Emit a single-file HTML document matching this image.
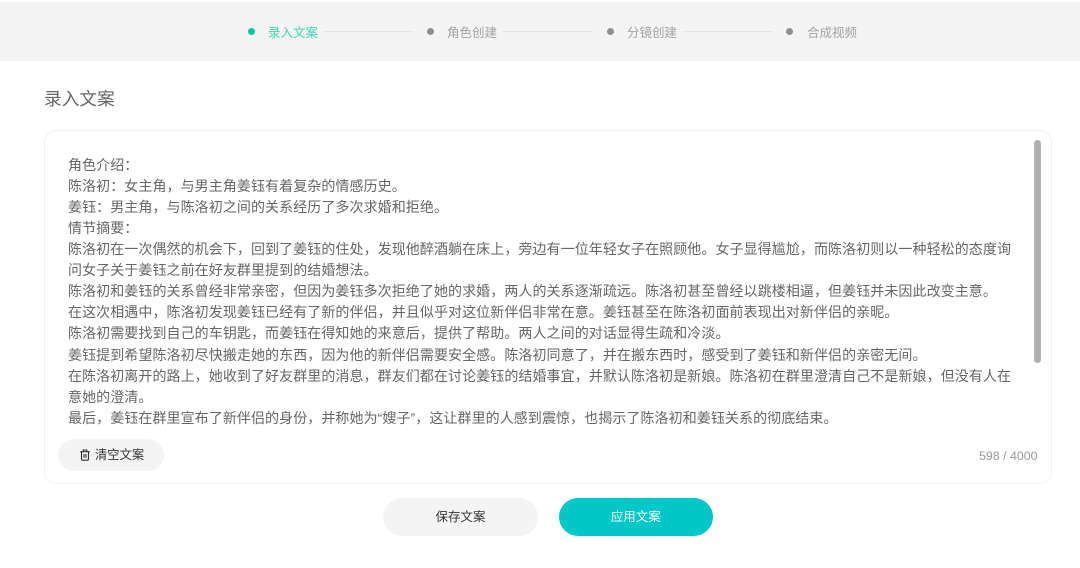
<!DOCTYPE html>
<html lang="zh">
<head>
<meta charset="utf-8">
<title>录入文案</title>
<style>
*{box-sizing:border-box;margin:0;padding:0}
html,body{width:1080px;height:568px;overflow:hidden;background:#fff}
body{position:relative;font-family:"Liberation Sans","Noto Sans CJK SC",sans-serif;color:#666}
.abs{position:absolute}
.bar{left:0;top:2px;width:1080px;height:59px;background:#f4f4f4}
.dot{width:7px;height:7px;border-radius:50%;background:#8f8f8f;top:27.5px}
.lbl{top:24px;font-size:12.5px;line-height:18px;color:#a3a3a3;white-space:nowrap}
.ln{top:31px;width:89px;height:1px;background:#e6e6e6}
h1{left:44px;top:87px;font-size:17.7px;line-height:24px;font-weight:400;color:#666;white-space:nowrap}
.card{left:44px;top:130px;width:1008px;height:354px;border:1px solid #f1f1f1;border-radius:12px;background:#fff}
.t{left:68px;font-size:14px;line-height:21px;color:#666;white-space:nowrap;letter-spacing:.075px}
.thumb{left:1034px;top:140px;width:7px;height:223px;border-radius:4px;background:#b0b0b0}
.clear{left:58px;top:439px;width:106px;height:32px;border-radius:16px;background:#f4f4f4}
.clear-t{left:95px;top:446px;font-size:12.3px;line-height:18px;color:#333;white-space:nowrap}
.count{left:979px;top:448px;font-size:12.4px;line-height:16px;color:#999;white-space:nowrap}
.btn{top:498px;width:155px;height:38px;border-radius:19px;text-align:center;font-size:12.5px;line-height:38px}
</style>
</head>
<body>
<div class="abs bar"></div>

<div class="abs dot" style="left:247.500px;background:#00c8a0"></div>
<div class="abs lbl" style="left:268px;color:#3ed6b4">录入文案</div>
<div class="abs ln" style="left:324px"></div>
<div class="abs dot" style="left:427px"></div>
<div class="abs lbl" style="left:447px">角色创建</div>
<div class="abs ln" style="left:503px"></div>
<div class="abs dot" style="left:606.500px"></div>
<div class="abs lbl" style="left:627px">分镜创建</div>
<div class="abs ln" style="left:683px"></div>
<div class="abs dot" style="left:786px"></div>
<div class="abs lbl" style="left:807px">合成视频</div>

<h1 class="abs">录入文案</h1>

<div class="abs card"></div>

<div class="abs t" style="top:155px">角色介绍：</div>
<div class="abs t" style="top:176px">陈洛初：女主角，与男主角姜钰有着复杂的情感历史。</div>
<div class="abs t" style="top:197px">姜钰：男主角，与陈洛初之间的关系经历了多次求婚和拒绝。</div>
<div class="abs t" style="top:218px">情节摘要：</div>
<div class="abs t" style="top:239px">陈洛初在一次偶然的机会下，回到了姜钰的住处，发现他醉酒躺在床上，旁边有一位年轻女子在照顾他。女子显得尴尬，而陈洛初则以一种轻松的态度询</div>
<div class="abs t" style="top:260px">问女子关于姜钰之前在好友群里提到的结婚想法。</div>
<div class="abs t" style="top:281px">陈洛初和姜钰的关系曾经非常亲密，但因为姜钰多次拒绝了她的求婚，两人的关系逐渐疏远。陈洛初甚至曾经以跳楼相逼，但姜钰并未因此改变主意。</div>
<div class="abs t" style="top:302px">在这次相遇中，陈洛初发现姜钰已经有了新的伴侣，并且似乎对这位新伴侣非常在意。姜钰甚至在陈洛初面前表现出对新伴侣的亲昵。</div>
<div class="abs t" style="top:323px">陈洛初需要找到自己的车钥匙，而姜钰在得知她的来意后，提供了帮助。两人之间的对话显得生疏和冷淡。</div>
<div class="abs t" style="top:345px">姜钰提到希望陈洛初尽快搬走她的东西，因为他的新伴侣需要安全感。陈洛初同意了，并在搬东西时，感受到了姜钰和新伴侣的亲密无间。</div>
<div class="abs t" style="top:366px">在陈洛初离开的路上，她收到了好友群里的消息，群友们都在讨论姜钰的结婚事宜，并默认陈洛初是新娘。陈洛初在群里澄清自己不是新娘，但没有人在</div>
<div class="abs t" style="top:387px">意她的澄清。</div>
<div class="abs t" style="top:408px">最后，姜钰在群里宣布了新伴侣的身份，并称她为“嫂子”，这让群里的人感到震惊，也揭示了陈洛初和姜钰关系的彻底结束。</div>

<div class="abs thumb"></div>

<div class="abs clear"></div>
<svg class="abs" style="left:79px;top:449px" width="12" height="12" viewBox="0 0 12 12" fill="none" stroke="#333" stroke-width="1.1" aria-hidden="true">
  <path d="M1.2 2.7H10.8"/>
  <path d="M4.2 2.5V1H7.8V2.5"/>
  <path d="M2.5 2.7V10C2.5 10.7 3 11.2 3.7 11.2H8.3C9 11.2 9.5 10.7 9.5 10V2.7"/>
  <path d="M5 5V8.8M7 5V8.8"/>
</svg>
<div class="abs clear-t">清空文案</div>
<div class="abs count">598 / 4000</div>

<div class="abs btn" style="left:383px;background:#f4f4f4;color:#333">保存文案</div>
<div class="abs btn" style="left:558.500px;width:154.500px;background:#00c8c8;color:#fff">应用文案</div>
</body>
</html>
